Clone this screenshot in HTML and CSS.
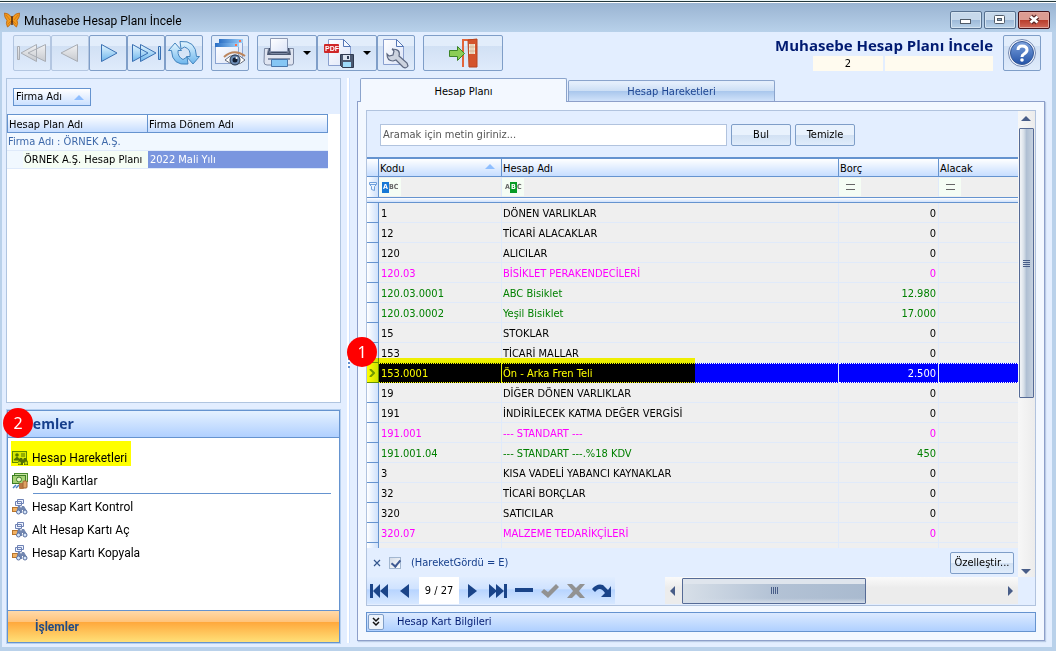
FILE: index.html
```html
<!DOCTYPE html>
<html lang="tr">
<head>
<meta charset="utf-8">
<title>Muhasebe Hesap Planı İncele</title>
<link rel="stylesheet" href="styles.css">
</head>
<body>
<svg class="defs" aria-hidden="true">
  <defs>
    <linearGradient id="blue" x1="0" y1="0" x2="0" y2="1"><stop offset="0" stop-color="#e4f6ff"/><stop offset="1" stop-color="#6cb5ec"/></linearGradient>
    <linearGradient id="grey" x1="0" y1="0" x2="0" y2="1"><stop offset="0" stop-color="#f0f1f3"/><stop offset="1" stop-color="#c6c9ce"/></linearGradient>
    <linearGradient id="paper" x1="0" y1="0" x2="1" y2="1"><stop offset="0" stop-color="#ffffff"/><stop offset="1" stop-color="#dbe4f8"/></linearGradient>
    <linearGradient id="win" x1="0" y1="0" x2="1" y2="0"><stop offset="0" stop-color="#2b6fc4"/><stop offset="1" stop-color="#9fd2fa"/></linearGradient>
    <linearGradient id="help" x1="0" y1="0" x2="0" y2="1"><stop offset="0" stop-color="#7da2dd"/><stop offset="1" stop-color="#2353a8"/></linearGradient>
    <symbol id="i-find" viewBox="0 0 16 16">
      <path d="M5.500.500h6v4h-6zM3.500 2.500h6v4h-6z" fill="#eef3ff" stroke="#6f83b5"/>
      <path d="M5 4.500h3" stroke="#6f83b5"/>
      <rect x="0.500" y="8.500" width="5" height="4" fill="#f2b264" stroke="#b8752c"/>
      <path d="M6 7h2l1 2 1-2h2l3 5v2h-4v-3h-1v3H5v-3z" fill="#7186b0"/>
      <circle cx="6.500" cy="13" r="2" fill="#d5e6fb" stroke="#5b719f"/><circle cx="13" cy="13" r="2" fill="#d5e6fb" stroke="#5b719f"/>
    </symbol>
  </defs>
</svg>
<div class="window">
  <header class="titlebar">
    <svg class="logo" viewBox="0 0 16 16" width="16" height="16"><path d="M8 6Q5 1 .500 1 0 5 3 8.500 1.500 11 3.500 15 6 14 8 9 10 14 12.500 15 14.500 11 13 8.500 16 5 15.500 1 11 1 8 6Z" fill="#f39a1d" stroke="#b86210" stroke-width=".800"/><path d="m2 3 4 5m8-5-4 5m-6 4 3-3m5 3L9 9" stroke="#c5700f" stroke-width=".700"/><path d="M8 4v9" stroke="#4f2608" stroke-width="1.500"/></svg>
    <span class="title">Muhasebe Hesap Planı İncele</span>
    <div class="window-buttons">
      <button aria-label="Simge durumuna küçült"><svg viewBox="0 0 30 16" width="30" height="16"><rect x="9.500" y="7.500" width="10" height="4" fill="#fff" stroke="#505b68"/></svg></button>
      <button aria-label="Ekranı kapla"><svg viewBox="0 0 30 16" width="30" height="16"><rect x="9.500" y="3.500" width="10" height="8" rx="1" fill="#fff" stroke="#505b68"/><rect x="12.500" y="6.500" width="4" height="2" fill="#8fa9c6" stroke="#505b68"/></svg></button>
      <button class="close" aria-label="Kapat"><svg viewBox="0 0 30 16" width="30" height="16"><path d="m11.500 4.500 7 6m0-6-7 6" stroke="#5d2827" stroke-width="5"/><path d="m11.500 4.500 7 6m0-6-7 6" stroke="#fff" stroke-width="2.600"/></svg></button>
    </div>
  </header>

  <div class="toolbar">
    <div class="tool-group">
      <button class="tool" disabled aria-label="İlk"><svg viewBox="0 0 30 30" width="30" height="30"><g fill="url(#grey)" stroke="#a9adb4"><path d="M.500 8.500h2v13h-2zM19.500 6.500v17L4 15zM28.500 6.500v17L11 15z"/></g></svg></button>
      <button class="tool" disabled aria-label="Önceki"><svg viewBox="0 0 30 30" width="30" height="30"><path d="M22.500 6.500v17L6 15z" fill="url(#grey)" stroke="#a9adb4"/></svg></button>
      <button class="tool" aria-label="Sonraki"><svg viewBox="0 0 30 30" width="30" height="30"><path d="M8.500 6.500v17L24 15z" fill="url(#blue)" stroke="#3a70b2"/></svg></button>
      <button class="tool" aria-label="Son"><svg viewBox="0 0 30 30" width="30" height="30"><g fill="url(#blue)" stroke="#3a70b2"><path d="M1.500 6.500v17L17 15zM9.500 6.500v17L25 15zM27.500 8.500h2v13h-2z"/></g></svg></button>
      <button class="tool" aria-label="Yenile"><svg viewBox="0 0 32 28" width="32" height="28"><g fill="url(#blue)" stroke="#4585be"><path d="M7 4 13.500 11.500H10Q9.500 18 15 20.500L19 18 20 25Q4 27 3.500 11.500H.500Z"/><path d="M25 25 18.500 17.500H22Q23 10 16.500 8L13 10 12 2.500Q28 1 28.500 17.500H31.500Z"/></g></svg></button>
    </div>
    <div class="tool-group">
      <button class="tool" aria-label="Görünüm"><svg viewBox="0 0 32 30" width="32" height="30"><rect x="5.500" y="1.500" width="23" height="18" fill="url(#paper)" stroke="#8aa4d2"/><path d="M5 1h24v4H5z" fill="url(#win)"/><path d="M25 2h2v2h-2z" fill="#ff6d4a"/><rect x="1.500" y="5.500" width="23" height="20" fill="url(#paper)" stroke="#8aa4d2"/><path d="M1 5h24v4H1z" fill="url(#win)"/><path d="M21 6h2v2h-2z" fill="#ff6d4a"/><path d="M11 22q10-10 20 0-9 9-20 0" fill="#fff" stroke="#666c79"/><path d="M10 19q10-9 21-1" fill="none" stroke="#bc865d" stroke-width="2"/><circle cx="21" cy="22" r="5" fill="#6e8db5" stroke="#27374e"/><circle cx="21" cy="22" r="2.500" fill="#101c30"/><circle cx="22.500" cy="20" r="1" fill="#fff"/></svg></button>
    </div>
    <div class="tool-group">
      <button class="tool wide" aria-label="Yazdır"><svg viewBox="0 0 32 32" width="32" height="32"><path d="M5 11h22v8H5z" fill="#3c4964"/><path d="M7.500 1.500h17v13h-17z" fill="url(#paper)" stroke="#8e9ab4"/><path d="M1.500 11.500h4q0 5 4 5h13q4 0 4-5h4V26q0 2-2 2H4q-3 0-3-3z" fill="#e0e5f1" stroke="#7c89a3"/><path d="M5 12q1 5 5 5h12q4 0 5-5l1 6H4z" fill="#4c5973"/><path d="M5 22h22" stroke="#8a96ae" stroke-width="2"/><path d="M8.500 22.500h16v7h-16z" fill="#85c6f4" stroke="#4976aa"/></svg><i class="drop"></i></button>
      <button class="tool wide" aria-label="PDF olarak kaydet"><svg viewBox="0 0 32 32" width="32" height="32"><path d="M5.500 2.500h15l7 7v19h-22z" fill="url(#paper)" stroke="#8aa0cf"/><path d="M20.500 2.500v7h7z" fill="#f5f9ff" stroke="#5576b5"/><rect x="1" y="7" width="15" height="9" rx="1" fill="#cf2727"/><text x="2" y="14" class="pdf">PDF</text><path d="M17.500 17.500h13v13h-11l-2-2z" fill="#4b5870" stroke="#303b50"/><path d="M20 18h7v5h-7z" fill="#dce4f0"/><path d="M24 19h2v3h-2z" fill="#324057"/><path d="M20 25h8v5h-8z" fill="#9edafa"/></svg><i class="drop"></i></button>
      <button class="tool" aria-label="Ayarlar"><svg viewBox="0 0 30 32" width="30" height="32"><path d="M2.500 2.500h13l7 7v18h-20z" fill="url(#paper)" stroke="#8aa0cf"/><path d="M15.500 2.500v7h7z" fill="#f5f9ff" stroke="#5576b5"/><path d="m11 12 2 2-1 4-4 1-2-2q0 7 6 7l3-1 7 7q3 2 5-1l-1-3-8-7q2-7-7-7" fill="#ccd3df" stroke="#5d6880" stroke-width="1.200"/></svg></button>
    </div>
    <button class="tool exit" aria-label="Çıkış"><svg viewBox="0 0 32 32" width="32" height="32"><path d="M15 2h15v28h-2V4H17v26h-2z" fill="#e2643a"/><path d="m21 3 9-1v28h-8z" fill="#d4542c" stroke="#b84420"/><path d="M22 7h6v10h-6z" fill="#f4ead5"/><path d="M24 7v10m2-10v10m-4-7h6m-6 4h6" stroke="#cfa887" stroke-width=".700"/><path d="M2.500 13.500h8v-4l7 7-7 7v-4h-8z" fill="#8bcd55" stroke="#3c8427"/></svg></button>
    <div class="heading">
      <h1>Muhasebe Hesap Planı İncele</h1>
      <div class="fields"><output>2</output><output></output></div>
    </div>
    <button class="tool" aria-label="Yardım"><svg viewBox="0 0 32 32" width="32" height="32"><circle cx="16" cy="16" r="13.500" fill="#f5f8ff" stroke="#7287b0"/><circle cx="16" cy="16" r="11.500" fill="url(#help)" stroke="#335796"/><path d="M12 13q0-4 4-4 5 0 5 4 0 2-3 4-2 1-2 3" fill="none" stroke="#fff" stroke-width="3"/><circle cx="16" cy="23" r="1.800" fill="#fff"/></svg></button>
  </div>

  <main class="workspace">
    <aside class="left">
      <section class="firms">
        <div class="group-panel"><button class="chip">Firma Adı <i class="sort"></i></button></div>
        <table class="firm-table">
          <colgroup><col class="c-indent"><col class="c-plan"><col></colgroup>
          <thead><tr><th colspan="2">Hesap Plan Adı</th><th>Firma Dönem Adı</th></tr></thead>
          <tbody>
            <tr class="firm-group"><td colspan="3">Firma Adı : ÖRNEK A.Ş.</td></tr>
            <tr><td></td><td class="plan">ÖRNEK A.Ş. Hesap Planı</td><td class="period">2022 Mali Yılı</td></tr>
          </tbody>
        </table>
      </section>
      <nav class="tasks">
        <h2>İşlemler</h2>
        <ul>
          <li class="first"><button class="marked"><svg viewBox="0 0 16 16" width="16" height="16"><rect x=".500" y="1.500" width="14" height="11" fill="#d7e8a5" stroke="#5d8b35"/><circle cx="5" cy="5" r="1.800" fill="#54762e"/><path d="M2 10q3-5 6 0zM9 4h4M9 6h4" fill="#54762e" stroke="#54762e"/><path d="M8 8h2l1 2 1-2h2l2 4v3h-4v-3h-1v3H6v-3z" fill="#536f45"/><circle cx="7.500" cy="13" r="1.500" fill="#c7ddb5"/><circle cx="14" cy="13" r="1.500" fill="#c7ddb5"/></svg>Hesap Hareketleri</button></li>
          <li class="second"><button><svg viewBox="0 0 16 16" width="16" height="16"><rect x="2.500" y=".500" width="13" height="8" fill="#c8e6a0" stroke="#4a8b2d"/><rect x=".500" y="2.500" width="13" height="8" fill="#a6d274" stroke="#3c7d25"/><circle cx="7" cy="6.500" r="2.500" fill="#e6f6c8" stroke="#3c7d25"/><path d="m1 15 3-3m0 3 3-3" stroke="#4d82c2" stroke-width="1.500"/><rect x="7" y="10" width="5" height="6" rx="1" fill="#b87844"/><rect x="11" y="8" width="4" height="7" rx="1" fill="#dfa364" stroke="#a36532"/></svg>Bağlı Kartlar</button></li>
          <li class="split"><button><svg width="16" height="16"><use href="#i-find"/></svg>Hesap Kart Kontrol</button></li>
          <li><button><svg width="16" height="16"><use href="#i-find"/></svg>Alt Hesap Kartı Aç</button></li>
          <li><button><svg width="16" height="16"><use href="#i-find"/></svg>Hesap Kartı Kopyala</button></li>
        </ul>
        <button class="task-footer">İşlemler</button>
        <span class="badge badge-two">2</span>
      </nav>
    </aside>
    <div class="splitter"><i></i></div>
    <section class="right">
      <div class="tabs" role="tablist"><button class="tab active" role="tab" aria-selected="true">Hesap Planı</button><button class="tab" role="tab" aria-selected="false">Hesap Hareketleri</button></div>
      <div class="page">
        <div class="grid-panel">
          <div class="grid-main">
            <div class="grid-left">
              <form class="search"><input type="text" aria-label="Arama" placeholder="Aramak için metin giriniz..."><button type="button">Bul</button><button type="button">Temizle</button></form>
              <div class="rows">
                <table class="accounts">
                  <colgroup><col class="c-mark"><col class="c-code"><col class="c-name"><col class="c-debit"><col></colgroup>
                  <thead>
                    <tr><th></th><th>Kodu<i class="sort"></i></th><th>Hesap Adı</th><th>Borç</th><th>Alacak</th></tr>
                    <tr class="filters"><td><svg viewBox="0 0 8 10" width="8" height="10"><path d="M.500.500h7v2l-2 2v4l-3-1v-3l-2-2zM1 2.500h6" fill="#eaf4ff" stroke="#6fa0dc"/></svg></td><td><span class="abc"><b>A</b>BC</span></td><td><span class="abc contains">A<b>B</b>C</span></td><td><span class="abc equals"></span></td><td><span class="abc equals"></span></td></tr>
                    <tr class="rule"><td colspan="5"></td></tr>
                  </thead>
                  <tbody>
                    <tr><td></td><td>1</td><td>DÖNEN VARLIKLAR</td><td>0</td><td></td></tr>
                    <tr><td></td><td>12</td><td>TİCARİ ALACAKLAR</td><td>0</td><td></td></tr>
                    <tr><td></td><td>120</td><td>ALICILAR</td><td>0</td><td></td></tr>
                    <tr class="pink"><td></td><td>120.03</td><td>BİSİKLET PERAKENDECİLERİ</td><td>0</td><td></td></tr>
                    <tr class="green"><td></td><td>120.03.0001</td><td>ABC Bisiklet</td><td>12.980</td><td></td></tr>
                    <tr class="green"><td></td><td>120.03.0002</td><td>Yeşil Bisiklet</td><td>17.000</td><td></td></tr>
                    <tr><td></td><td>15</td><td>STOKLAR</td><td>0</td><td></td></tr>
                    <tr><td></td><td>153</td><td>TİCARİ MALLAR</td><td>0</td><td></td></tr>
                    <tr class="selected"><td><svg viewBox="0 0 6 8" width="6" height="8"><path d="m1 0 4 4-4 4" fill="none" stroke="#6f9838" stroke-width="2"/></svg><span class="marker"></span><span class="badge badge-one">1</span></td><td>153.0001</td><td>Ön - Arka Fren Teli</td><td>2.500</td><td></td></tr>
                    <tr><td></td><td>19</td><td>DİĞER DÖNEN VARLIKLAR</td><td>0</td><td></td></tr>
                    <tr><td></td><td>191</td><td>İNDİRİLECEK KATMA DEĞER VERGİSİ</td><td>0</td><td></td></tr>
                    <tr class="pink"><td></td><td>191.001</td><td>--- STANDART ---</td><td>0</td><td></td></tr>
                    <tr class="green"><td></td><td>191.001.04</td><td>--- STANDART ---.%18 KDV</td><td>450</td><td></td></tr>
                    <tr><td></td><td>3</td><td>KISA VADELİ YABANCI KAYNAKLAR</td><td>0</td><td></td></tr>
                    <tr><td></td><td>32</td><td>TİCARİ BORÇLAR</td><td>0</td><td></td></tr>
                    <tr><td></td><td>320</td><td>SATICILAR</td><td>0</td><td></td></tr>
                    <tr class="pink"><td></td><td>320.07</td><td>MALZEME TEDARİKÇİLERİ</td><td>0</td><td></td></tr>
                    <tr><td></td><td></td><td></td><td></td><td></td></tr>
                  </tbody>
                </table>
              </div>
              <div class="filterbar">
                <button class="clear" aria-label="Filtreyi kaldır"><svg viewBox="0 0 8 8" width="8" height="8"><path d="m1 1 6 6m0-6L1 7" stroke="#33558d" stroke-width="1.200"/></svg></button>
                <label><input type="checkbox" checked>(HareketGördü = E)</label>
                <button class="customize">Özelleştir...</button>
              </div>
            </div>
            <div class="vscroll"><i class="up"></i><div class="vthumb"><i class="grip"></i></div><i class="down"></i></div>
          </div>
          <div class="navigator">
            <div class="record-nav">
              <button aria-label="İlk kayıt"><svg viewBox="0 0 20 16" width="20" height="16"><path d="M1 1h3v14H1zM4 8l7-7v14zM11 8l8-7v14z"/></svg></button>
              <button aria-label="Önceki kayıt"><svg viewBox="0 0 20 16" width="20" height="16"><path d="m5 8 9-7v14z"/></svg></button>
              <output>9 / 27</output>
              <button aria-label="Sonraki kayıt"><svg viewBox="0 0 20 16" width="20" height="16"><path d="M6 1v14l9-7z"/></svg></button>
              <button aria-label="Son kayıt"><svg viewBox="0 0 20 16" width="20" height="16"><path d="M1 1v14l8-7zM8 1v14l8-7zM16 1h3v14h-3z"/></svg></button>
              <button aria-label="Sil"><svg viewBox="0 0 20 16" width="20" height="16"><path d="M1 5h18v4H1z"/></svg></button>
              <button disabled aria-label="Onayla"><svg viewBox="0 0 20 16" width="20" height="16"><path d="m1 9 3-3 4 3 8-8 3 3L8 15z"/></svg></button>
              <button disabled aria-label="İptal"><svg viewBox="0 0 20 16" width="20" height="16"><path d="M1 1h5l4 4 4-4h5l-6 7 6 7h-5l-4-4-4 4H1l6-7z"/></svg></button>
              <button aria-label="Tazele"><svg viewBox="0 0 20 16" width="20" height="16"><path d="M0 6q5-6 11-4l5 5 3-4v11H9l4-4q-4-6-8-3L3 9z"/></svg></button>
            </div>
            <div class="hscroll"><i class="arrow-left"></i><div class="hthumb"><i></i></div><i class="arrow-right"></i></div>
          </div>
        </div>
        <div class="card-bar"><button aria-label="Genişlet"><svg viewBox="0 0 10 10" width="10" height="10"><path d="m2 1 3 3 3-3M2 5l3 3 3-3" fill="none" stroke="#111" stroke-width="1.500"/></svg></button><span>Hesap Kart Bilgileri</span></div>
      </div>
    </section>
  </main>
</div>
</body>
</html>
```
FILE: styles.css
```css
* { box-sizing: border-box; }
body { margin: 0; color: #000; font: 11px/16px "DejaVu Sans Condensed", "Noto Sans", sans-serif; }
button, input { font: inherit; color: inherit; padding: 0; margin: 0; }
svg { display: block; flex: none; }
i { display: block; flex: none; }
.defs { position: absolute; width: 0; height: 0; }
.window { display: flex; flex-direction: column; height: 100vh; min-height: 400px; border-top: 1px solid #eaf4f6; background: #b9d1ea; padding: 0 4px 4px 2px; overflow: hidden; }

.titlebar { display: flex; align-items: center; flex: none; height: 31px; margin: 0 -4px 0 -2px; padding: 6px 6px 0 4px; border-top: 1px solid #24383c; background: linear-gradient(#fff 1px, #9ab4d2 1px, #b8d1ea); }
.title { margin-left: 4px; padding-top: 2px; font: 12px/18px Roboto, "Noto Sans", sans-serif; }
.window-buttons { display: flex; gap: 2px; margin-left: auto; }
.window-buttons button { width: 32px; height: 18px; border: 1px solid #56708f; border-radius: 2px; background: linear-gradient(#c6d8eb 50%, #9db9d8 50%, #b9d2e9); box-shadow: inset 0 0 0 1px #d4e3f1; }
.window-buttons .close { border-color: #43131b; background: linear-gradient(#dc9c92 50%, #b83b2a 50%, #d0695a); box-shadow: inset 0 0 0 1px #e2a79f; }

.toolbar { display: flex; flex: none; gap: 8px; height: 46px; padding: 3px 11px 0; background: #e3eeff; }
.tool-group { display: flex; }
.tool { display: flex; align-items: center; justify-content: center; flex: none; width: 38px; height: 36px; border: 1px solid #7f9ec8; border-radius: 2px; background: linear-gradient(#e2edfb 28%, #d1e0f4 28%, #dfebfb); }
.tool:disabled { border-color: #b3c6e1; }
.wide { width: 60px; gap: 8px; }
.exit { width: 80px; }
.drop { border: 4px solid transparent; border-top-color: #000; border-bottom: 0; }
.pdf { font: bold 7px "Liberation Sans", sans-serif; fill: #fff; }
.heading { display: flex; flex-direction: column; align-items: flex-end; margin-left: auto; }
h1 { margin: 0; color: #001a71; font: bold 15px/21px "Open Sans", "Noto Sans", sans-serif; white-space: nowrap; }
.fields { display: flex; gap: 2px; }
.fields output { width: 108px; height: 15px; background: #fffbef; line-height: 16px; text-align: center; }
.fields output:first-child { width: 70px; }
.heading + .tool { margin-left: 2px; }

.workspace { display: flex; flex: 1; min-height: 0; padding: 0 7px 4px 4px; background: #e3eeff; }
.left { display: flex; flex-direction: column; flex: none; width: 335px; gap: 7px; }
.firms { flex: 1; min-height: 0; border: 1px solid #b0c5e0; background: #fff; }
.group-panel { height: 35px; padding: 9px 6px; background: #e3eeff; }
.chip { display: flex; align-items: center; justify-content: space-between; width: 78px; height: 18px; padding: 0 6px 0 2px; border: 1px solid #6593cf; background: linear-gradient(#fff, #cbe0ff); }
.sort { border: 5px solid transparent; border-bottom-color: #90bfff; border-top: 0; }
table { border-collapse: separate; border-spacing: 0; table-layout: fixed; }
th, td { padding: 0; text-align: left; font-weight: normal; white-space: nowrap; }
.firm-table { width: 321px; }
.c-indent { width: 16px; } .c-plan { width: 125px; }
.firm-table th { height: 19px; padding: 2px 0 0 1px; border: 1px solid #6593cf; border-left-width: 0; background: linear-gradient(#fff, #c6ddff); line-height: 15px; }
.firm-table th:first-child { border-left-width: 1px; }
.firm-table td { height: 18px; border-bottom: 1px solid #dfeafb; background: #f1f8ff; }
.firm-group td { padding-left: 1px; color: #3e69aa; }
.firm-table .plan { padding-left: 1px; background: #f5fdf4; }
.firm-table .period { padding-left: 2px; background: #7a96df; color: #fff; }

.tasks { position: relative; display: flex; flex-direction: column; flex: none; height: 233px; margin: 0 1px; border: 1px solid #6593cf; background: #fff; color: #000; font: 12px/18px Roboto, "Noto Sans", sans-serif; outline: 1px solid #b5cfee; }
.tasks h2 { margin: 0; height: 27px; padding-left: 9px; border-bottom: 1px solid #6593cf; background: linear-gradient(#e5f1ff, #b0d0ff); color: #163f8c; font: bold 14px/26px "Open Sans", "Noto Sans", sans-serif; }
.tasks ul { flex: 1; margin: 0; padding: 3px 8px 0 3px; list-style: none; }
.tasks li { height: 23px; }
.tasks li button { display: flex; align-items: center; gap: 4px; height: 23px; border: 0; background: none; padding-left: 1px; white-space: nowrap; }
.tasks li.first { height: 28px; }
.tasks li.second { height: 24px; }
.tasks li .marked { width: 120px; height: 25px; padding-top: 8px; background: #ff0; }
.tasks .marked svg { mix-blend-mode: multiply; }
.tasks li.split { height: 25px; margin-left: 22px; border-top: 1px solid #6593cf; padding-top: 1px; }
.tasks .split button { margin-left: -22px; }
.task-footer { height: 32px; padding-left: 27px; border: 0; border-top: 1px solid #6593cf; background: linear-gradient(#ffd9a9, #ffc37a 35%, #ffa83c 36%, #ffe078); color: #234b84; font: bold 12px/18px Roboto, "Noto Sans", sans-serif; text-align: left; }
.badge { position: absolute; z-index: 3; width: 30px; height: 30px; border-radius: 50%; background: #f00; color: #fff; font: 16px/30px "Noto Sans", sans-serif; text-align: center; }
.badge-two { left: -5px; top: -3px; }

.splitter { display: flex; align-items: center; justify-content: center; flex: none; width: 16px; background: linear-gradient(90deg, transparent 6px, #fff 6px 8px, #cfe2ff 8px 9px, transparent 9px); }
.splitter i { width: 2px; height: 14px; background: repeating-linear-gradient(#5e8fd0 0 2px, #fff 2px 4px); }
.right { display: flex; flex: 1; flex-direction: column; min-width: 0; padding-bottom: 2px; }
.tabs { display: flex; align-items: flex-end; gap: 1px; flex: none; height: 23px; padding-left: 3px; }
.tab { width: 207px; height: 21px; padding-top: 2px; border: 1px solid #8ba4cc; border-bottom: 0; border-radius: 2px 2px 0 0; background: linear-gradient(#e4eefc 2px, #cddff5 48%, #a8c6ec 50%, #d0e2fa); color: #1d4592; }
.tab.active { z-index: 1; height: 24px; margin-bottom: -1px; background: #f3f8ff; color: #000; }
.page { display: flex; flex: 1; flex-direction: column; gap: 6px; min-height: 0; padding: 8px; border: 1px solid #8d9fc9; background: #f3f8ff; box-shadow: 1px 1px 1px #bacbe5; }
.grid-panel { display: flex; flex: 1; flex-direction: column; min-height: 0; border: 1px solid #b1c3de; background: #e3eeff; }
.grid-main { display: flex; flex: 1; min-height: 0; }
.grid-left { display: flex; flex: 1; flex-direction: column; min-width: 0; }
.search { display: flex; align-items: center; flex: none; gap: 4px; height: 46px; padding: 1px 0 0 13px; }
.search input { width: 347px; height: 22px; padding: 0 2px; border: 1px solid #b1c3de; background: #fff; }
.search input::placeholder { color: #555; opacity: 1; }
.search button, .customize { width: 60px; height: 22px; border: 1px solid #7f9ec8; border-radius: 2px; background: linear-gradient(#e9f2fd 48%, #d2e1f3 50%, #e0ecfb); }
.rows { flex: 1; min-height: 0; overflow: visible clip; }
.accounts { width: 100%; }
.c-mark { width: 12px; } .c-code { width: 123px; } .c-name { width: 337px; } .c-debit { width: 100px; }
.accounts th { position: relative; height: 20px; padding: 2px 0 0 1px; border: solid #6593cf; border-width: 2px 1px 1px 0; background: linear-gradient(#fff, #c6ddff); line-height: 15px; }
.accounts th:last-child { border-right: 0; }
.accounts th .sort { position: absolute; right: 6px; top: 5px; }
.accounts td { height: 20px; padding: 2px 2px 0; border: solid #e0eafa; border-width: 0 1px 1px 0; background: #efefef; line-height: 16px; }
.accounts td:nth-child(3) { padding-left: 1px; }
.accounts tr td:last-child { border-right: 0; }
.accounts tr td:first-child { position: relative; padding: 0 0 0 2px; border-color: #6593cf; background: linear-gradient(90deg, #fff, #cfe1fb); }
.accounts td:nth-child(4) { text-align: right; }
.accounts .filters td { text-align: left; border-bottom: 0; padding: 0; }
.accounts .rule td, .accounts .rule td:first-child { height: 6px; line-height: 4px; padding: 0; border: solid #6593cf; border-width: 1px 0; background: linear-gradient(#fff, #cfe1fb); }
.abc { display: flex; align-items: center; width: 22px; height: 18px; padding-left: 3px; background: #f5fdf4; color: #666; font: bold 7px/11px "DejaVu Sans Condensed", sans-serif; }
.abc b { width: 7px; background: #1679d6; color: #fff; text-align: center; }
.abc.contains b { background: #069b25; }
.equals::before { content: ""; width: 9px; height: 4px; margin-left: 4px; border: solid #666; border-width: 1px 0; }
.pink { color: #f0f; } .green { color: #008000; }
.accounts .selected td:not(:first-child) { padding-top: 1px; border-top: 1px dotted #fff; border-bottom: 1px dotted #fff; background: #00f; color: #fff; }
.marker { position: absolute; z-index: 2; left: 0; top: -5px; width: 328px; height: 25px; background: #ff0; mix-blend-mode: multiply; }
.badge-one { left: -20px; top: -26px; }
.filterbar { display: flex; align-items: center; flex: none; height: 29px; padding: 0 4px 0 6px; color: #163f8c; }
.filterbar .clear { border: 0; background: none; }
.filterbar label { display: flex; align-items: center; margin-left: 8px; }
.filterbar input { appearance: none; width: 12px; height: 12px; margin: 0 10px 0 0; border: 1px solid #a3b7d0; background: linear-gradient(135deg, #d4dce8, #fff); }
.filterbar input:checked::before { content: ""; display: block; width: 4px; height: 7px; margin: 0 0 0 3px; border: solid #405a92; border-width: 0 2px 2px 0; transform: rotate(40deg); }
.customize { width: 64px; margin-left: auto; color: #000; }
.vscroll { display: flex; align-items: center; flex-direction: column; flex: none; width: 17px; padding: 5px 1px 3px 0; background: linear-gradient(90deg, #f7f7f7, #ececec); }
.up, .down, .arrow-left, .arrow-right { border: 5px solid transparent; }
.up { border-top: 0; border-bottom-color: #485d88; }
.down { border-bottom: 0; border-top-color: #485d88; margin-top: auto; }
.vthumb { display: flex; align-items: center; justify-content: center; width: 15px; height: 59%; margin-top: 7px; border: 1px solid #566b96; border-radius: 1px; background: linear-gradient(90deg, #eef1f5 1px, #d7dfe8 30%, #afbfd3 50%, #c7d2e0); }
.grip { width: 7px; height: 7px; background: repeating-linear-gradient(#485d88 0 1px, transparent 1px 2px); }
.navigator { display: flex; flex: none; height: 28px; padding: 0 17px 1px 0; justify-content: space-between; }
.record-nav { display: flex; align-items: stretch; gap: 6px; width: 248px; padding-left: 2px; background: linear-gradient(#e1edff, #cfe2ff 45%, #b7d4ff 47%, #d7e8ff); }
.record-nav button { display: flex; align-items: center; flex: none; border: 0; background: none; fill: #1a4489; }
.record-nav button:disabled { fill: #929292; }
.record-nav output { width: 40px; margin: 0 -3px 0 -2px; background: #fff; text-align: center; line-height: 28px; }
.hscroll { display: flex; align-items: center; width: 353px; padding: 0 5px; background: linear-gradient(#fafafa, #ececec 40%); }
.arrow-left { border-left: 0; border-right-color: #485d88; }
.arrow-right { border-right: 0; border-left-color: #485d88; margin-left: auto; }
.hthumb { display: flex; align-items: center; justify-content: center; width: 184px; height: 26px; margin-left: 7px; border: 1px solid #566b96; border-radius: 1px; background: linear-gradient(#dfe5ed 20%, transparent 21% 80%, #d3dce8), linear-gradient(90deg, #d7dfe8, #b3c2d5 50%, #a9bacf); }
.hthumb i { width: 7px; height: 7px; background: repeating-linear-gradient(90deg, #485d88 0 1px, transparent 1px 2px); }
.card-bar { display: flex; align-items: center; flex: none; height: 20px; gap: 13px; padding-left: 1px; border: 1px solid #6593cf; background: linear-gradient(#dceaff, #afd0ff); color: #001a71; }
.card-bar span { line-height: 18px; }
.card-bar button { display: flex; align-items: center; justify-content: center; width: 16px; height: 16px; border: 1px solid #7f9ec8; border-radius: 2px; background: #edf3fb; }
```
